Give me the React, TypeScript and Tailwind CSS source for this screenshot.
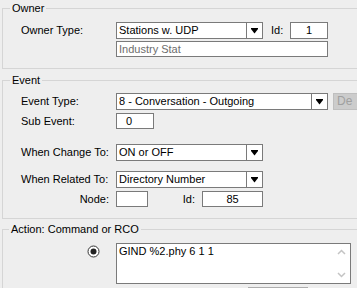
import React from "react"

// little black arrow used in the classic combo boxes
function Arrow() {
    return (
        <svg width="7" height="6" viewBox="0 0 7 6">
            <path d="M0 0h7v1L3.5 5.5 0 1z" fill="#000" />
        </svg>
    )
}

function Combo({ value, className }: { value: string; className: string }) {
    return (
        <div className={`flex h-[17px] border border-[#7a7a7a] bg-white ${className}`}>
            <span className="flex-1 overflow-hidden whitespace-nowrap pl-[2px] leading-[15px]">{value}</span>
            <span className="flex w-[16px] items-center justify-center border-l border-[#7a7a7a]">
                <Arrow />
            </span>
        </div>
    )
}

function Group({ title, titleClass, className, children }: { title: string; titleClass: string; className: string; children: React.ReactNode }) {
    return (
        <fieldset className={`mx-[2px] w-[400px] min-w-0 border border-[#d5d5d5] p-0 ${className}`}>
            <legend className={`px-[2px] leading-[13px] ${titleClass}`}>{title}</legend>
            {children}
        </fieldset>
    )
}

export default function App() {
    return (
        <div className="h-[288px] w-[357px] overflow-hidden bg-[#eeeeee] pt-[2px] text-[11px] text-black" style={{ fontFamily: '"Liberation Sans", Arial, sans-serif' }}>
            <Group title="Owner" titleClass="ml-[7px]" className="">
                <div className="flex flex-col pb-[11px] pl-[18px] pt-[7px]">
                    <div className="flex h-[17px] items-center">
                        <span className="w-[95px]">Owner Type:</span>
                        <Combo value="Stations w. UDP" className="w-[147px]" />
                        <span className="ml-[8px] w-[19px]">Id:</span>
                        <div className="h-[17px] w-[38px] border border-[#7a7a7a] bg-white text-center leading-[15px]">1</div>
                    </div>
                    <div className="mt-[2px] flex">
                        <span className="w-[95px]" />
                        <div className="h-[16px] w-[212px] border border-[#7a7a7a] bg-white pl-[2px] leading-[14px] text-[#6d6d6d]">Industry Stat</div>
                    </div>
                </div>
            </Group>

            <Group title="Event" titleClass="ml-[7px]" className="mt-[5px]">
                <div className="flex flex-col pb-[11px] pl-[18px] pt-[6px]">
                    <div className="flex h-[17px] items-center">
                        <span className="w-[95px]">Event Type:</span>
                        <Combo value="8 - Conversation - Outgoing" className="w-[212px]" />
                        <div className="ml-[5px] h-[17px] w-[60px] border border-[#bfbfbf] bg-[#cccccc] pl-[3px] text-[12px] leading-[15px] text-[#a0a0a0]">De</div>
                    </div>
                    <div className="mt-[3px] flex h-[16px] items-center">
                        <span className="w-[95px]">Sub Event:</span>
                        <div className="h-[16px] w-[38px] border border-[#7a7a7a] bg-white pl-[9px] leading-[14px]">0</div>
                    </div>
                    <div className="mt-[15px] flex h-[17px] items-center">
                        <span className="w-[95px]">When Change To:</span>
                        <Combo value="ON or OFF" className="w-[147px]" />
                    </div>
                    <div className="mt-[10px] flex h-[17px] items-center">
                        <span className="w-[95px]">When Related To:</span>
                        <Combo value="Directory Number" className="w-[147px]" />
                    </div>
                    <div className="mt-[3px] flex h-[16px] items-center">
                        <span className="w-[95px] pr-[7px] text-right">Node:</span>
                        <div className="h-[16px] w-[32px] border border-[#7a7a7a] bg-white" />
                        <span className="w-[54px] pr-[7px] text-right">Id:</span>
                        <div className="h-[16px] w-[61px] border border-[#7a7a7a] bg-white text-center leading-[14px]">85</div>
                    </div>
                </div>
            </Group>

            <Group title="Action: Command or RCO" titleClass="ml-[6px]" className="mt-[4px]">
                <div className="flex flex-col pl-[18px] pt-[7px]">
                    <div className="flex">
                        <div className="w-[95px] pl-[66px] pt-[2px]">
                            <svg width="13" height="13" viewBox="0 0 13 13">
                                <circle cx="6.5" cy="6.5" r="5.5" fill="#fff" stroke="#333" strokeWidth="1" />
                                <circle cx="6.5" cy="6.5" r="3" fill="#222" />
                            </svg>
                        </div>
                        <div className="flex h-[41px] w-[235px] border border-[#7a7a7a] bg-white">
                            <span className="flex-1 pl-[2px] pt-[1px] leading-[13px]">GIND %2.phy 6 1 1</span>
                            <div className="flex w-[17px] flex-col items-center justify-between py-[5px]">
                                <svg width="9" height="6" viewBox="0 0 9 6">
                                    <path d="M1 5l3.5-3.5L8 5" fill="none" stroke="#c4c4c4" strokeWidth="1.5" />
                                </svg>
                                <svg width="9" height="6" viewBox="0 0 9 6">
                                    <path d="M1 1l3.5 3.5L8 1" fill="none" stroke="#c4c4c4" strokeWidth="1.5" />
                                </svg>
                            </div>
                        </div>
                    </div>
                    <div className="ml-[227px] mt-[3px] h-[22px] w-[60px] border border-[#adadad] bg-[#e1e1e1]" />
                </div>
            </Group>
        </div>
    )
}
